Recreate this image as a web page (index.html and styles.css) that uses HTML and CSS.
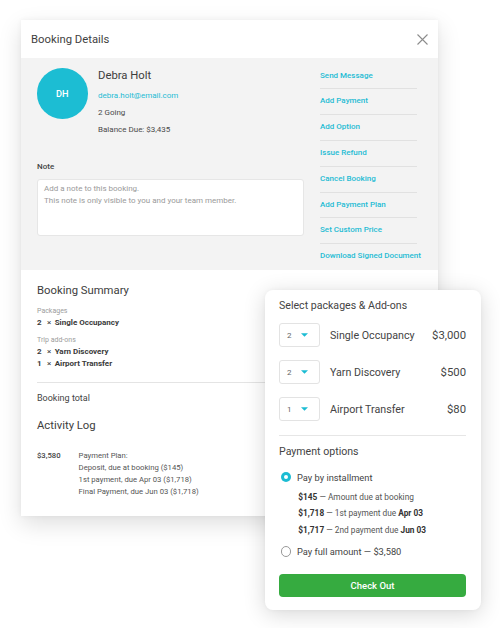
FILE: index.html
```html
<!DOCTYPE html>
<html>
<head>
<meta charset="utf-8">
<title>Booking Details</title>
<link rel="stylesheet" href="styles.css">
</head>
<body>
<div class="stage">
  <div class="card">
    <div class="card-head">
      <h1 class="title">Booking Details</h1>
      <svg class="close" width="11" height="11" viewBox="0 0 11 11"><path d="M0.5 0.5L10.5 10.5M10.5 0.5L0.5 10.5" stroke="#8c8c8c" stroke-width="1.1" fill="none"/></svg>
    </div>
    <div class="guest">
      <div class="guest-main">
        <div class="profile">
          <div class="avatar">DH</div>
          <div class="info">
            <div class="name">Debra Holt</div>
            <div class="email">debra.holt@email.com</div>
            <div class="meta">2 Going</div>
            <div class="meta">Balance Due: $3,435</div>
          </div>
        </div>
        <div class="note-label">Note</div>
        <div class="note">
          <p>Add a note to this booking.</p>
          <p>This note is only visible to you and your team member.</p>
        </div>
      </div>
      <ul class="actions">
        <li>Send Message</li>
        <li>Add Payment</li>
        <li>Add Option</li>
        <li>Issue Refund</li>
        <li>Cancel Booking</li>
        <li>Add Payment Plan</li>
        <li>Set Custom Price</li>
        <li>Download Signed Document</li>
      </ul>
    </div>
    <div class="summary">
      <h2 class="section-title">Booking Summary</h2>
      <div class="group-label">Packages</div>
      <div class="line-item">2<span class="times">×</span>Single Occupancy</div>
      <div class="group-label">Trip add-ons</div>
      <div class="line-item">2<span class="times">×</span>Yarn Discovery</div>
      <div class="line-item">1<span class="times">×</span>Airport Transfer</div>
      <div class="divider"></div>
      <div class="total-label">Booking total</div>
      <h2 class="section-title log-title">Activity Log</h2>
      <div class="log">
        <div class="log-amount">$3,580</div>
        <div class="log-text">
          <p>Payment Plan:</p>
          <p>Deposit, due at booking ($145)</p>
          <p>1st payment, due Apr 03 ($1,718)</p>
          <p>Final Payment, due Jun 03 ($1,718)</p>
        </div>
      </div>
    </div>
  </div>

  <div class="checkout">
    <div class="co-title">Select packages &amp; Add-ons</div>
    <div class="pkg-list">
      <div class="pkg">
        <div class="qty"><span>2</span><svg width="7" height="4" viewBox="0 0 7 4"><path d="M0 0.3H7L3.5 3.8Z" fill="#1cbcd3"/></svg></div>
        <div class="pkg-name">Single Occupancy</div>
        <div class="pkg-price">$3,000</div>
      </div>
      <div class="pkg">
        <div class="qty"><span>2</span><svg width="7" height="4" viewBox="0 0 7 4"><path d="M0 0.3H7L3.5 3.8Z" fill="#1cbcd3"/></svg></div>
        <div class="pkg-name">Yarn Discovery</div>
        <div class="pkg-price">$500</div>
      </div>
      <div class="pkg">
        <div class="qty"><span>1</span><svg width="7" height="4" viewBox="0 0 7 4"><path d="M0 0.3H7L3.5 3.8Z" fill="#1cbcd3"/></svg></div>
        <div class="pkg-name">Airport Transfer</div>
        <div class="pkg-price">$80</div>
      </div>
    </div>
    <div class="co-divider"></div>
    <div class="co-title pay-title">Payment options</div>
    <div class="radio-row first">
      <span class="radio checked"></span>
      <span>Pay by installment</span>
    </div>
    <div class="installments">
      <p><strong>$145</strong> — Amount due at booking</p>
      <p><strong>$1,718</strong> — 1st payment due <strong>Apr 03</strong></p>
      <p><strong>$1,717</strong> — 2nd payment due <strong>Jun 03</strong></p>
    </div>
    <div class="radio-row second">
      <span class="radio"></span>
      <span>Pay full amount — $3,580</span>
    </div>
    <button class="checkout-btn">Check Out</button>
  </div>
</div>
</body>
</html>
```

FILE: styles.css
```css
* {
  box-sizing: border-box;
  margin: 0;
  padding: 0;
}

body {
  margin: 0;
  background: #ffffff;
  font-family: Roboto, "Liberation Sans", sans-serif;
  color: #404040;
}

.stage {
  position: relative;
  width: 500px;
  height: 628px;
  padding: 20px 0 0 21px;
}

/* Main card */
.card {
  width: 417px;
  background: #ffffff;
  box-shadow: 0 8px 22px rgba(0, 0, 0, 0.13), 0 0 5px rgba(0, 0, 0, 0.05);
}

.card-head {
  height: 38px;
  display: flex;
  align-items: center;
  justify-content: space-between;
  padding: 0 10px;
}

.title {
  font-size: 11.3px;
  font-weight: 400;
  color: #3f3f3f;
}

.close {
  display: block;
  width: 11px;
  height: 11px;
}

.guest {
  height: 212px;
  background: #f3f3f3;
  display: flex;
  gap: 16px;
  padding: 10px 21px 0 16px;
}

.guest-main {
  width: 267px;
}

.profile {
  display: flex;
  gap: 10.5px;
}

.avatar {
  width: 50.5px;
  height: 50.5px;
  flex: none;
  border-radius: 50%;
  background: #1cbdd3;
  color: #ffffff;
  display: flex;
  align-items: center;
  justify-content: center;
  font-size: 9.2px;
  font-weight: 500;
}

.name {
  font-size: 11.3px;
  line-height: 16px;
  color: #3d3d3d;
}

.email {
  margin-top: 3px;
  font-size: 8px;
  line-height: 17px;
  color: #1fbcd4;
}

.meta {
  font-size: 8px;
  line-height: 17px;
  color: #4a4a4a;
}

.note-label {
  margin-top: 22px;
  font-size: 8px;
  line-height: 14px;
  font-weight: 500;
  color: #444444;
}

.note {
  margin-top: 5px;
  height: 57px;
  background: #ffffff;
  border: 1px solid #e6e6e6;
  border-radius: 3px;
  padding: 3px 6px;
  font-size: 8px;
  line-height: 12.4px;
  color: #9a9a9a;
}

.actions {
  list-style: none;
  width: 97px;
  margin-top: -4.4px;
}

.actions li {
  height: 25.8px;
  line-height: 24.8px;
  border-bottom: 1px solid #e1e1e1;
  font-size: 8px;
  font-weight: 500;
  color: #1fbcd4;
  white-space: nowrap;
}

.actions li:last-child {
  border-bottom: 0;
}

/* Summary */
.summary {
  padding: 12px 21px 18px 16px;
}

.section-title {
  font-size: 11.3px;
  line-height: 18px;
  font-weight: 400;
  color: #3d3d3d;
}

.group-label {
  margin-top: 5px;
  font-size: 7px;
  line-height: 12px;
  color: #9c9c9c;
}

.line-item {
  font-size: 8px;
  line-height: 12px;
  font-weight: 700;
  color: #3a3a3a;
}

.times {
  display: inline-block;
  margin: 0 3.3px 0 5.5px;
  font-weight: 400;
}

.divider {
  margin-top: 12px;
  border-top: 1px solid #e4e4e4;
}

.total-label {
  margin-top: 7.5px;
  font-size: 9px;
  line-height: 14px;
  color: #444444;
}

.log-title {
  margin-top: 12.5px;
}

.log {
  display: flex;
  margin-top: 15px;
  font-size: 7.7px;
  line-height: 12px;
  color: #555555;
}

.log-amount {
  width: 41.6px;
  font-weight: 500;
  color: #444444;
}

/* Checkout overlay */
.checkout {
  position: absolute;
  left: 265px;
  top: 290px;
  width: 216px;
  height: 320px;
  background: #ffffff;
  border-radius: 8px;
  box-shadow: 0 4px 22px rgba(0, 0, 0, 0.16), 0 0 4px rgba(0, 0, 0, 0.04);
  padding: 8px 15px 0 14px;
}

.co-title {
  font-size: 10.6px;
  line-height: 16px;
  color: #444444;
}

.pkg-list {
  margin-top: 9px;
  display: flex;
  flex-direction: column;
  gap: 13px;
}

.pkg {
  display: flex;
  align-items: center;
  height: 24px;
}

.qty {
  width: 41px;
  height: 24px;
  flex: none;
  border: 1px solid #e3e3e3;
  border-radius: 3px;
  display: flex;
  align-items: center;
  padding-left: 7px;
  font-size: 8px;
  color: #666666;
}

.qty svg {
  display: block;
  margin-left: 9.5px;
}

.pkg-name {
  flex: 1;
  margin-left: 10px;
  font-size: 10.7px;
  color: #444444;
}

.pkg-price {
  font-size: 11.3px;
  color: #444444;
}

.co-divider {
  margin-top: 14px;
  border-top: 1px solid #e6e6e6;
}

.pay-title {
  margin-top: 8px;
}

.radio-row {
  display: flex;
  align-items: center;
  gap: 6px;
  height: 16px;
  padding-left: 1.5px;
  font-size: 9.3px;
  color: #444444;
}

.radio-row.first {
  margin-top: 9px;
}

.radio-row.second {
  margin-top: 5.7px;
}

.radio {
  width: 10.5px;
  height: 10.5px;
  flex: none;
  border-radius: 50%;
  border: 1px solid #9a9a9a;
  background: #ffffff;
  display: flex;
  align-items: center;
  justify-content: center;
}

.radio.checked {
  border: 0;
  background: #1cbcd3;
}

.radio.checked::after {
  content: "";
  width: 4px;
  height: 4px;
  border-radius: 50%;
  background: #ffffff;
}

.installments {
  margin-top: 3.5px;
  padding-left: 19.3px;
  font-size: 8.3px;
  line-height: 16.5px;
  color: #555555;
}

.installments strong {
  font-weight: 700;
  color: #333333;
}

.checkout-btn {
  display: block;
  width: 100%;
  height: 23.5px;
  margin-top: 14.3px;
  border: 0;
  border-radius: 4px;
  background: #36ab40;
  color: #ffffff;
  font-family: Roboto, "Liberation Sans", sans-serif;
  font-size: 9.5px;
  font-weight: 500;
}
```
